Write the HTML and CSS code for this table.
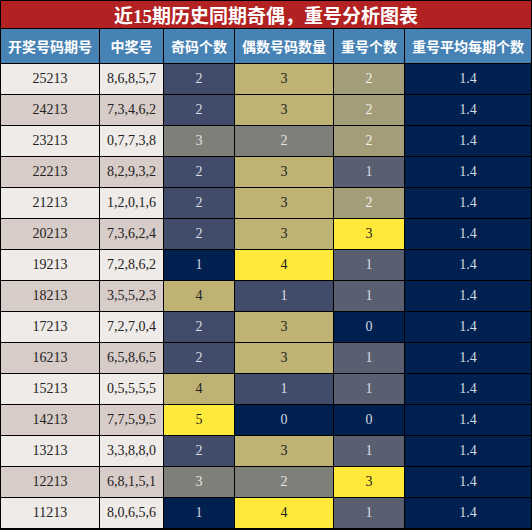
FILE: index.html
```html
<!DOCTYPE html>
<html lang="zh">
<head>
<meta charset="utf-8">
<link rel="stylesheet" href="styles.css">
</head>
<body>
<div class="board">
  <div class="title">近15期历史同期奇偶，重号分析图表</div>
  <div class="hd">开奖号码期号</div>
  <div class="hd">中奖号</div>
  <div class="hd">奇码个数</div>
  <div class="hd">偶数号码数量</div>
  <div class="hd">重号个数</div>
  <div class="hd">重号平均每期个数</div>

  <div class="row a"><div class="c">25213</div><div class="c">8,6,8,5,7</div><div class="c slate">2</div><div class="c khaki">3</div><div class="c gkhaki">2</div><div class="c navy">1.4</div></div>
  <div class="row b"><div class="c">24213</div><div class="c">7,3,4,6,2</div><div class="c slate">2</div><div class="c khaki">3</div><div class="c gkhaki">2</div><div class="c navy">1.4</div></div>
  <div class="row a"><div class="c">23213</div><div class="c">0,7,7,3,8</div><div class="c grey">3</div><div class="c grey">2</div><div class="c gkhaki">2</div><div class="c navy">1.4</div></div>
  <div class="row b"><div class="c">22213</div><div class="c">8,2,9,3,2</div><div class="c slate">2</div><div class="c khaki">3</div><div class="c gblue">1</div><div class="c navy">1.4</div></div>
  <div class="row a"><div class="c">21213</div><div class="c">1,2,0,1,6</div><div class="c slate">2</div><div class="c khaki">3</div><div class="c gkhaki">2</div><div class="c navy">1.4</div></div>
  <div class="row b"><div class="c">20213</div><div class="c">7,3,6,2,4</div><div class="c slate">2</div><div class="c khaki">3</div><div class="c yellow">3</div><div class="c navy">1.4</div></div>
  <div class="row a"><div class="c">19213</div><div class="c">7,2,8,6,2</div><div class="c navy">1</div><div class="c yellow">4</div><div class="c gblue">1</div><div class="c navy">1.4</div></div>
  <div class="row b"><div class="c">18213</div><div class="c">3,5,5,2,3</div><div class="c khaki">4</div><div class="c slate">1</div><div class="c gblue">1</div><div class="c navy">1.4</div></div>
  <div class="row a"><div class="c">17213</div><div class="c">7,2,7,0,4</div><div class="c slate">2</div><div class="c khaki">3</div><div class="c navy">0</div><div class="c navy">1.4</div></div>
  <div class="row b"><div class="c">16213</div><div class="c">6,5,8,6,5</div><div class="c slate">2</div><div class="c khaki">3</div><div class="c gblue">1</div><div class="c navy">1.4</div></div>
  <div class="row a"><div class="c">15213</div><div class="c">0,5,5,5,5</div><div class="c khaki">4</div><div class="c slate">1</div><div class="c gblue">1</div><div class="c navy">1.4</div></div>
  <div class="row b"><div class="c">14213</div><div class="c">7,7,5,9,5</div><div class="c yellow">5</div><div class="c navy">0</div><div class="c navy">0</div><div class="c navy">1.4</div></div>
  <div class="row a"><div class="c">13213</div><div class="c">3,3,8,8,0</div><div class="c slate">2</div><div class="c khaki">3</div><div class="c gblue">1</div><div class="c navy">1.4</div></div>
  <div class="row b"><div class="c">12213</div><div class="c">6,8,1,5,1</div><div class="c grey">3</div><div class="c grey">2</div><div class="c yellow">3</div><div class="c navy">1.4</div></div>
  <div class="row a"><div class="c">11213</div><div class="c">8,0,6,5,6</div><div class="c navy">1</div><div class="c yellow">4</div><div class="c gblue">1</div><div class="c navy">1.4</div></div>
</div>
</body>
</html>
```

FILE: styles.css
```css
html, body {
  margin: 0;
  padding: 0;
  background: #ffffff;
}

.board {
  width: 532px;
  height: 530px;
  box-sizing: border-box;
  background: #000000;
  padding: 1px;
  display: grid;
  grid-template-columns: 98px 63px 70px 98px 70px 126px;
  grid-template-rows: 27px 34px repeat(15, 30px);
  gap: 1px;
}

.title {
  grid-column: 1 / -1;
  background: #b22222;
  color: #ffffff;
  font-family: "Liberation Serif", "Noto Sans CJK SC", serif;
  font-weight: bold;
  font-size: 19px;
  display: flex;
  align-items: center;
  justify-content: center;
}

.hd {
  background: #4682b4;
  color: #ffffff;
  font-family: "Noto Sans CJK SC", sans-serif;
  font-weight: bold;
  font-size: 14px;
  display: flex;
  align-items: center;
  justify-content: center;
  white-space: nowrap;
}

.row {
  display: contents;
}

.c {
  display: flex;
  align-items: center;
  justify-content: center;
  font-family: "Liberation Serif", serif;
  font-size: 14px;
  color: #222222;
}

.row.a .c { background: #efebe8; }
.row.b .c { background: #d8ccc8; }

.row .c.navy { background: #002050; color: #d4d8e0; }
.row .c.slate { background: #414c6b; color: #dcdee4; }
.row .c.grey { background: #7f7f7a; color: #e4e4e2; }
.row .c.khaki { background: #beb274; color: #222222; }
.row .c.gkhaki { background: #a39d7a; color: #f2f2ee; }
.row .c.gblue { background: #595e70; color: #dcdee4; }
.row .c.yellow { background: #ffe93b; color: #222222; }
```
